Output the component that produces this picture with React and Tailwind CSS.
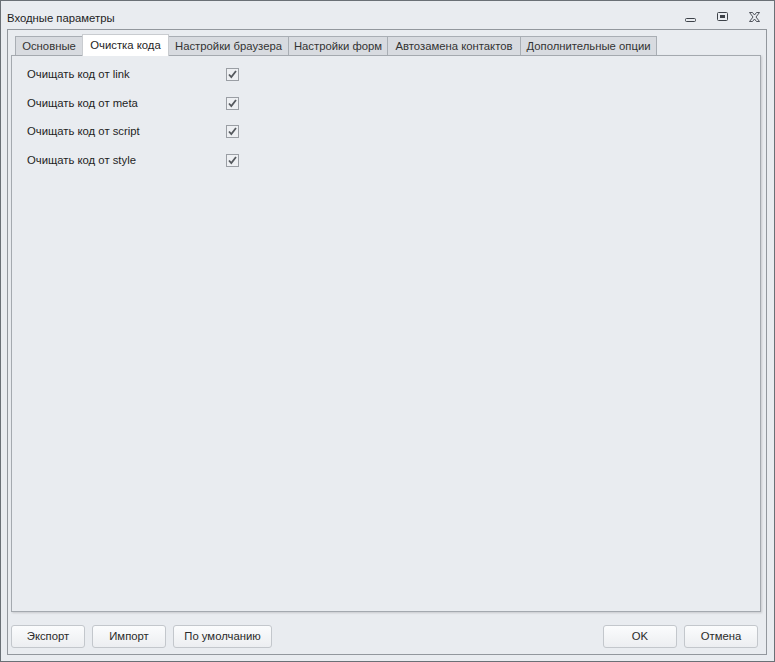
import React from "react";

const tabs = [
  { label: "Основные", w: 68 },
  { label: "Очистка кода", w: 87, active: true },
  { label: "Настройки браузера", w: 121 },
  { label: "Настройки форм", w: 100 },
  { label: "Автозамена контактов", w: 134 },
  { label: "Дополнительные опции", w: 137 },
];

const rows = ["link", "meta", "script", "style"];

function Check() {
  return (
    <div className="w-[13px] h-[13px] border border-[#9a9ea4] bg-[#eef0f3] flex items-center justify-center">
      <svg width="9" height="9" viewBox="0 0 9 9">
        <path d="M1 4.5 L3.3 7 L8 1" fill="none" stroke="#55595e" strokeWidth="1.8" />
      </svg>
    </div>
  );
}

function Btn({ children, w }) {
  return (
    <div
      className="h-[23px] rounded-[3px] border border-[#c3c7cc] bg-gradient-to-b from-[#fbfcfd] to-[#eceef1] flex items-center justify-center text-[#2a2a2a]"
      style={{ width: w }}
    >
      {children}
    </div>
  );
}

export default function App() {
  return (
    <div
      className="w-[775px] h-[662px] border border-[#6a7076] bg-[#e9ecf0] flex flex-col text-[11.3px] text-[#1e1e1e]"
      style={{ fontFamily: '"Liberation Sans", Arial, sans-serif' }}
    >
      <div className="h-[28px] flex items-center pl-[6px] pr-[14px] shrink-0">
        <div className="flex-1 pt-[6px]">Входные параметры</div>
        <div className="flex items-center gap-[21px] pt-[4px]">
          <svg width="11" height="11" viewBox="0 0 11 11">
            <rect x="0.5" y="6.5" width="10" height="3" rx="1" fill="none" stroke="#3d4249" />
          </svg>
          <svg width="11" height="11" viewBox="0 0 11 11">
            <rect x="0.5" y="0.5" width="10" height="8" rx="1" fill="none" stroke="#3d4249" />
            <rect x="3" y="3" width="5" height="3" fill="#3d4249" />
          </svg>
          <svg width="11" height="11" viewBox="0 0 11 11">
            <path d="M0.5 0.5 L3.5 0.5 L5.5 3 L7.5 0.5 L10.5 0.5 L7 5 L10.5 9.5 L7.5 9.5 L5.5 7 L3.5 9.5 L0.5 9.5 L4 5 Z" fill="none" stroke="#3d4249" strokeWidth="0.9" />
          </svg>
        </div>
      </div>
      <div className="flex-1 ml-[6px] mr-[7px] mb-[6px] border border-[#92979d] flex flex-col pt-[4px] pl-[3px] pr-[5px]">
        <div className="flex items-end h-[21px] relative z-10 pl-[4px]">
          {tabs.map((t) =>
            t.active ? (
              <div
                key={t.label}
                className="h-[22px] -mb-[1px] -ml-px bg-white border border-[#c9ccd0] border-b-0 flex items-center justify-center relative z-10"
                style={{ width: t.w }}
              >
                {t.label}
              </div>
            ) : (
              <div
                key={t.label}
                className="h-[19px] bg-[#d8dbe0] border border-[#a9aeb4] border-b-0 -ml-px first:ml-0 flex items-center justify-center text-[#333]"
                style={{ width: t.w }}
              >
                {t.label}
              </div>
            )
          )}
        </div>
        <div className="h-[557px] border border-[#a4a9af] bg-[#e9ecf0] shadow-[1px_1px_2px_rgba(0,0,0,0.15)] pt-[4px] pl-[15px]">
          {rows.map((r) => (
            <div key={r} className="h-[28.7px] flex items-center">
              <div className="w-[199px]">Очищать код от {r}</div>
              <Check />
            </div>
          ))}
        </div>
        <div className="flex mt-[13px] gap-[7px] pr-[3px]">
          <Btn w={74}>Экспорт</Btn>
          <Btn w={74}>Импорт</Btn>
          <Btn w={99}>По умолчанию</Btn>
          <div className="flex-1" />
          <Btn w={74}>OK</Btn>
          <Btn w={74}>Отмена</Btn>
        </div>
      </div>
    </div>
  );
}
